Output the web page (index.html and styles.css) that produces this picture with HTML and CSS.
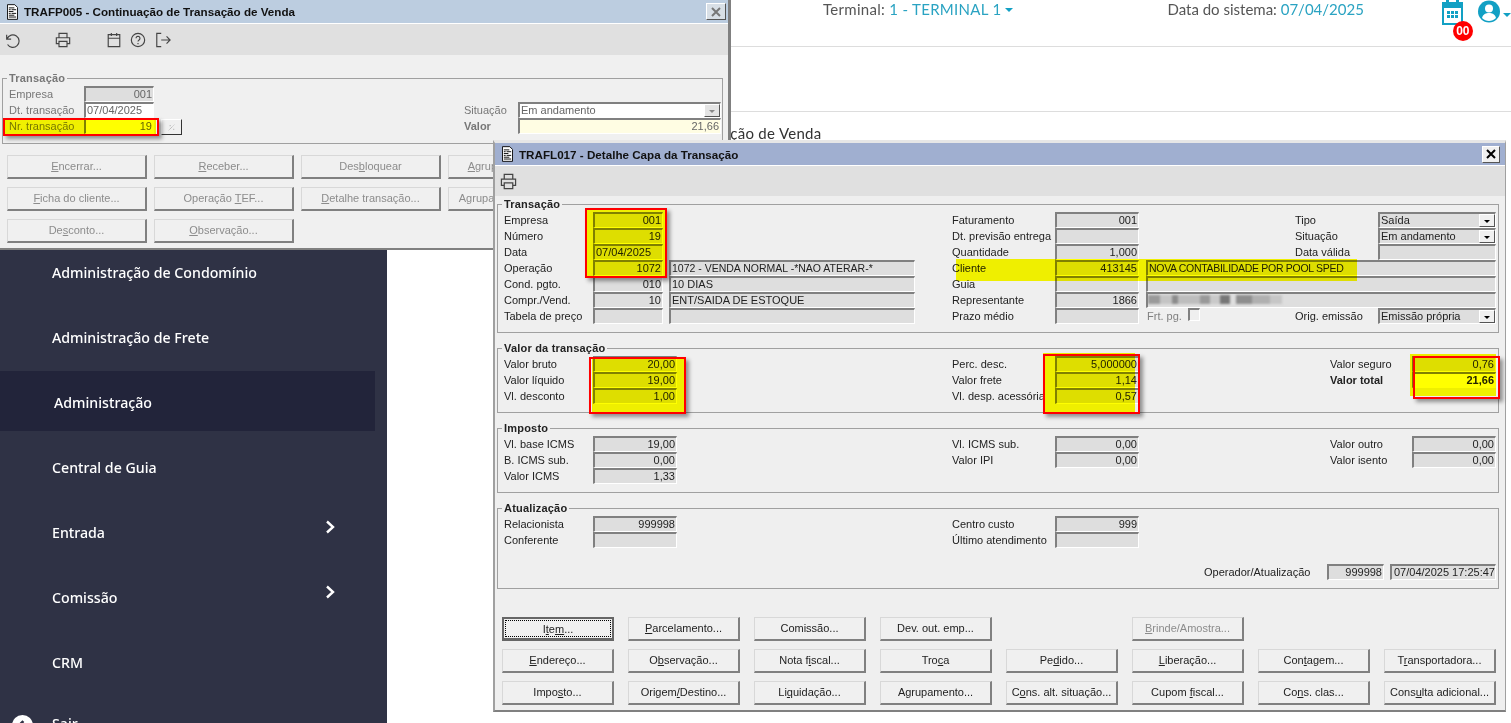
FILE: index.html
```html
<!DOCTYPE html>
<html lang="pt-BR">
<head>
  <meta charset="UTF-8" />
  <title>TRAFL017 - Detalhe Capa da Transação</title>
  <link rel="stylesheet" href="styles.css">
</head>
<body>
  <div class="app">
    <nav class="sidebar">
      <a class="side-item">Administração de Condomínio</a>
      <a class="side-item">Administração de Frete</a>
      <a class="side-item active">Administração</a>
      <a class="side-item">Central de Guia</a>
      <a class="side-item">Entrada <svg class="chev" viewBox="0 0 10 14"><path d="M2 1.5 8 7l-6 5.5" /></svg></a>
      <a class="side-item">Comissão <svg class="chev" viewBox="0 0 10 14"><path d="M2 1.5 8 7l-6 5.5" /></svg></a>
      <a class="side-item">CRM</a>
      <a class="side-item logout">
        <svg class="logout-icon" viewBox="0 0 24 24"><circle cx="12" cy="12" r="12" fill="#fff" /><path d="M13 7l-5 5 5 5M8 12h9" fill="none" stroke="#2f3245" stroke-width="3" /></svg>
        Sair
      </a>
    </nav>

    <main class="main">
      <header class="topbar">
        <span class="top-info terminal">Terminal: <b>1 - TERMINAL 1</b><i class="caret"></i></span>
        <span class="top-info sysdate">Data do sistema: <b>07/04/2025</b></span>
        <span class="cal-wrap">
          <svg class="cal-icon" viewBox="0 0 21 25">
            <path d="M4 0h3v4H4zM14 0h3v4h-3z" fill="#12a0c4" />
            <rect x="1" y="3" width="19" height="21" fill="#fff" stroke="#12a0c4" stroke-width="2" />
            <path d="M1 3h19v5H1z" fill="#12a0c4" />
            <path d="M5 11h3v3H5zM9 11h3v3H9zM13 11h3v3h-3zM5 15h3v3H5zM9 15h3v3H9zM13 15h3v3h-3z" fill="#12a0c4" />
          </svg>
          <span class="badge">00</span>
        </span>
        <svg class="user-icon" viewBox="0 0 22 23">
          <circle cx="11" cy="11.5" r="11" fill="#12a0c4" />
          <circle cx="11" cy="8.5" r="4" fill="#fff" />
          <path d="M4 18c1-4 4-5 7-5s6 1 7 5c-2 2-4.500 3-7 3s-5-1-7-3z" fill="#fff" />
        </svg>
        <i class="caret user-caret"></i>
      </header>
      <div class="subbar"></div>
      <h1 class="page-title">Continuação de Venda</h1>
    </main>
  </div>

  <!-- janela de tras -->
  <section class="win win-back">
    <div class="titlebar">
      <svg class="doc-icon" viewBox="0 0 12 17"><path d="M.5.5h8l3 3v13H.5z" fill="#fff" stroke="#000" /><path d="M2 4h6M2 6h2M5 6h5M2 8h5M2 10h2M5 10h5M2 12h6M2 14h8" stroke="#000" /></svg>
      <span class="title">TRAFP005 - Continuação de Transação de Venda</span>
      <span class="close off"><svg viewBox="0 0 10 10"><path d="M1 1l8 8M9 1l-8 8" /></svg></span>
    </div>
    <div class="toolbar">
      <svg class="tool tool-undo" viewBox="0 0 18 18"><path d="M3 3v5h5M3.500 7.500A7 7 0 1 1 4 14" /></svg>
      <svg class="tool tool-print" viewBox="0 0 18 18"><path d="M4.500 6V1.500h9V6M4.500 13H1.500V6.500h15V13h-3M4.500 10.500h9v6h-9z" /></svg>
      <svg class="tool tool-cal" viewBox="0 0 18 18"><path d="M2.500 3h13v13.500h-13zM2.500 7h13M6 1v3.500M12 1v3.500" /></svg>
      <svg class="tool tool-help" viewBox="0 0 18 18"><circle cx="9" cy="9" r="7.500" /><path d="M6.800 7a2.200 2.200 0 1 1 3.400 1.900c-.8.500-1.200 1-1.200 1.900M9 12.500v1.300" /></svg>
      <svg class="tool tool-exit" viewBox="0 0 18 18"><path d="M7 1.500H2v15h5M7 9h10M13 5l4 4-4 4" /></svg>
    </div>

    <fieldset class="group back-group">
      <legend>Transação</legend>
      <div class="back-row">
        <span class="lbl">Empresa</span><span class="fld num back-f">001</span>
      </div>
      <div class="back-row">
        <span class="lbl">Dt. transação</span><span class="fld white back-f">07/04/2025</span>
        <span class="lbl back-l2">Situação</span>
        <span class="fld white back-sel">Em andamento<i class="arrow off"></i></span>
      </div>
      <div class="back-row">
        <span class="lbl">Nr. transação</span><span class="fld white num back-f">19</span>
        <span class="zoom-btn"><svg viewBox="0 0 10 10"><path d="M2 8l6-6M3 3h1M7 7h1" /></svg></span>
        <span class="lbl back-l2 strong">Valor</span>
        <span class="fld cream num back-val">21,66</span>
      </div>
    </fieldset>

    <div class="back-btns">
      <button class="btn" disabled><u>E</u>ncerrar...</button>
      <button class="btn" disabled><u>R</u>eceber...</button>
      <button class="btn" disabled>Des<u>b</u>loquear</button>
      <button class="btn" disabled><u>A</u>grupar transação...</button>
      <button class="btn" disabled><u>F</u>icha do cliente...</button>
      <button class="btn" disabled>Operação <u>T</u>EF...</button>
      <button class="btn" disabled><u>D</u>etalhe transação...</button>
      <button class="btn" disabled>Agrupamento transação</button>
      <button class="btn" disabled>De<u>s</u>conto...</button>
      <button class="btn" disabled><u>O</u>bservação...</button>
    </div>

    <div class="mark mark-nr"></div>
    <div class="redbox box-nr"></div>
  </section>

  <!-- janela da frente -->
  <section class="win win-front">
    <div class="titlebar">
      <svg class="doc-icon" viewBox="0 0 12 17"><path d="M.5.5h8l3 3v13H.5z" fill="#fff" stroke="#000" /><path d="M2 4h6M2 6h2M5 6h5M2 8h5M2 10h2M5 10h5M2 12h6M2 14h8" stroke="#000" /></svg>
      <span class="title">TRAFL017 - Detalhe Capa da Transação</span>
      <span class="close"><svg viewBox="0 0 10 10"><path d="M1 1l8 8M9 1l-8 8" /></svg></span>
    </div>
    <div class="toolbar">
      <svg class="tool tool-print2" viewBox="0 0 18 18"><path d="M4.500 6V1.500h9V6M4.500 13H1.500V6.500h15V13h-3M4.500 10.500h9v6h-9z" /></svg>
    </div>

    <fieldset class="group g-trans">
      <legend>Transação</legend>
      <div class="row">
        <span class="lbl l1">Empresa</span><span class="fld num f1">001</span>
        <span class="lbl l2">Faturamento</span><span class="fld num f2">001</span>
        <span class="lbl l3">Tipo</span><span class="fld sel">Saída<i class="arrow"></i></span>
      </div>
      <div class="row">
        <span class="lbl l1">Número</span><span class="fld num f1">19</span>
        <span class="lbl l2">Dt. previsão entrega</span><span class="fld num f2"></span>
        <span class="lbl l3">Situação</span><span class="fld sel">Em andamento<i class="arrow"></i></span>
      </div>
      <div class="row">
        <span class="lbl l1">Data</span><span class="fld f1">07/04/2025</span>
        <span class="lbl l2">Quantidade</span><span class="fld num f2">1,000</span>
        <span class="lbl l3">Data válida</span><span class="fld sel"></span>
      </div>
      <div class="row">
        <span class="lbl l1">Operação</span><span class="fld num f1">1072</span><span class="fld desc caps">1072 - VENDA NORMAL -*NAO ATERAR-*</span>
        <span class="lbl l2">Cliente</span><span class="fld num f2">413145</span><span class="fld long caps tight">NOVA CONTABILIDADE POR POOL SPED</span>
      </div>
      <div class="row">
        <span class="lbl l1">Cond. pgto.</span><span class="fld num f1">010</span><span class="fld desc">10 DIAS</span>
        <span class="lbl l2">Guia</span><span class="fld num f2"></span><span class="fld long"></span>
      </div>
      <div class="row">
        <span class="lbl l1">Compr./Vend.</span><span class="fld num f1">10</span><span class="fld desc">ENT/SAIDA DE ESTOQUE</span>
        <span class="lbl l2">Representante</span><span class="fld num f2">1866</span><span class="fld long"><i class="blurred"></i></span>
      </div>
      <div class="row">
        <span class="lbl l1">Tabela de preço</span><span class="fld num f1"></span><span class="fld desc"></span>
        <span class="lbl l2">Prazo médio</span><span class="fld num f2"></span>
        <span class="frt"><span class="lbl off">Frt. pg.</span><i class="check"></i></span>
        <span class="lbl l3">Orig. emissão</span><span class="fld sel">Emissão própria<i class="arrow"></i></span>
      </div>
    </fieldset>

    <fieldset class="group">
      <legend>Valor da transação</legend>
      <div class="row">
        <span class="lbl l1">Valor bruto</span><span class="fld num f1w">20,00</span>
        <span class="lbl l2">Perc. desc.</span><span class="fld num f2">5,000000</span>
        <span class="lbl l4">Valor seguro</span><span class="fld num f4">0,76</span>
      </div>
      <div class="row">
        <span class="lbl l1">Valor líquido</span><span class="fld num f1w">19,00</span>
        <span class="lbl l2">Valor frete</span><span class="fld num f2">1,14</span>
        <span class="lbl l4 strong">Valor total</span><span class="fld white num f4 strong">21,66</span>
      </div>
      <div class="row">
        <span class="lbl l1">Vl. desconto</span><span class="fld num f1w">1,00</span>
        <span class="lbl l2">Vl. desp. acessória</span><span class="fld num f2">0,57</span>
      </div>
    </fieldset>

    <fieldset class="group">
      <legend>Imposto</legend>
      <div class="row">
        <span class="lbl l1">Vl. base ICMS</span><span class="fld num f1w">19,00</span>
        <span class="lbl l2">Vl. ICMS sub.</span><span class="fld num f2">0,00</span>
        <span class="lbl l4">Valor outro</span><span class="fld num f4">0,00</span>
      </div>
      <div class="row">
        <span class="lbl l1">B. ICMS sub.</span><span class="fld num f1w">0,00</span>
        <span class="lbl l2">Valor IPI</span><span class="fld num f2">0,00</span>
        <span class="lbl l4">Valor isento</span><span class="fld num f4">0,00</span>
      </div>
      <div class="row">
        <span class="lbl l1">Valor ICMS</span><span class="fld num f1w">1,33</span>
      </div>
    </fieldset>

    <fieldset class="group g-atual">
      <legend>Atualização</legend>
      <div class="row">
        <span class="lbl l1">Relacionista</span><span class="fld num f1w">999998</span>
        <span class="lbl l2">Centro custo</span><span class="fld num f2">999</span>
      </div>
      <div class="row">
        <span class="lbl l1">Conferente</span><span class="fld num f1w"></span>
        <span class="lbl l2">Último atendimento</span><span class="fld num f2"></span>
      </div>
      <div class="oper-row">
        <span class="lbl">Operador/Atualização</span>
        <span class="fld num oper-a">999998</span>
        <span class="fld oper-b">07/04/2025 17:25:47</span>
      </div>
    </fieldset>

    <div class="front-btns">
      <button class="btn focus"><span>I<u>t</u>e<u>m</u>...</span></button>
      <button class="btn"><u>P</u>arcelamento...</button>
      <button class="btn">Comissão...</button>
      <button class="btn">Dev. out. emp...</button>
      <span></span>
      <button class="btn" disabled><u>B</u>rinde/Amostra...</button>
      <span></span>
      <span></span>
      <button class="btn"><u>E</u>ndereço...</button>
      <button class="btn">O<u>b</u>servação...</button>
      <button class="btn">Nota f<u>i</u>scal...</button>
      <button class="btn">Tro<u>c</u>a</button>
      <button class="btn">Pe<u>d</u>ido...</button>
      <button class="btn"><u>L</u>iberação...</button>
      <button class="btn">Con<u>t</u>agem...</button>
      <button class="btn">T<u>r</u>ansportadora...</button>
      <button class="btn">Impo<u>s</u>to...</button>
      <button class="btn">Origem<u>/</u>Destino...</button>
      <button class="btn">Li<u>q</u>uidação...</button>
      <button class="btn">A<u>g</u>rupamento...</button>
      <button class="btn">C<u>o</u>ns. alt. situação...</button>
      <button class="btn">Cupom <u>f</u>iscal...</button>
      <button class="btn">Co<u>n</u>s. clas...</button>
      <button class="btn">Cons<u>u</u>lta adicional...</button>
    </div>

    <!-- marcacoes do print -->
    <div class="mark mark-a"></div>
    <div class="mark mark-b"></div>
    <div class="mark mark-c"></div>
    <div class="mark mark-d"></div>
    <div class="mark mark-e"></div>
    <div class="redbox box-a"></div>
    <div class="redbox box-b"></div>
    <div class="redbox box-c"></div>
    <div class="redbox box-d"></div>
  </section>
</body>
</html>
```

FILE: styles.css
```css
body {
  margin: 0;
  padding: 0;
  background: #fff;
  overflow: hidden;
  font-family: 'Liberation Sans', Arial, sans-serif;
}

.app {
  display: flex;
  height: 100vh;
  overflow: hidden;
}

/* menu lateral */
.sidebar {
  width: 387px;
  flex-shrink: 0;
  box-sizing: border-box;
  padding-top: 241px;
  background: #2f3245;
  overflow: hidden;
}

.side-item {
  position: relative;
  display: flex;
  align-items: center;
  width: 375px;
  height: 60px;
  margin-bottom: 5px;
  padding: 2px 0 0 52px;
  box-sizing: border-box;
  color: #fff;
  font-family: 'Noto Sans', sans-serif;
  font-size: 14.2px;
  font-weight: 500;
}

.side-item.active {
  background: #22243a;
  padding-left: 54px;
}

.side-item.logout {
  align-items: flex-start;
  padding-top: 18px;
}

.chev {
  position: absolute;
  left: 325px;
  top: 19px;
  width: 10px;
  height: 14px;
  fill: none;
  stroke: #fff;
  stroke-width: 2.4;
}

.logout-icon {
  position: absolute;
  left: 12px;
  top: 19px;
  width: 21px;
  height: 21px;
}

/* area branca */
.main {
  flex: 1;
  min-width: 0;
}

.topbar {
  display: flex;
  height: 46px;
  border-bottom: 1px solid #ddd;
  padding-left: 436px;
  font-family: 'Lato', sans-serif;
  font-size: 15px;
  color: #555;
}

.top-info {
  line-height: 18px;
  white-space: nowrap;
}

.terminal {
  letter-spacing: .3px;
}

.top-info b {
  font-weight: normal;
  color: #2aa3c2;
}

.sysdate {
  margin-left: 154px;
}

.caret {
  display: inline-block;
  margin-left: 4px;
  vertical-align: 3px;
  border-left: 4px solid transparent;
  border-right: 4px solid transparent;
  border-top: 4px solid #12a0c4;
}

.cal-wrap {
  position: relative;
  flex-shrink: 0;
  width: 21px;
  height: 25px;
  margin-left: 78px;
}

.cal-icon {
  display: block;
  width: 21px;
  height: 25px;
}

.badge {
  position: absolute;
  left: 11px;
  top: 21px;
  width: 20px;
  height: 20px;
  border-radius: 50%;
  background: #f00;
  color: #fff;
  font: bold 12px/20px 'Liberation Sans', sans-serif;
  text-align: center;
}

.user-icon {
  flex-shrink: 0;
  width: 22px;
  height: 23px;
  margin-left: 15px;
}

.user-caret {
  flex-shrink: 0;
  height: 0;
  margin: 13px 0 0 3px;
  vertical-align: top;
}

.subbar {
  height: 64px;
  border-bottom: 1px solid #ddd;
}

.page-title {
  margin: 12px 0 0 281px;
  font: normal 15px/18px 'Lato', sans-serif;
  letter-spacing: .3px;
  color: #333;
}

/* janelas */
.win {
  position: absolute;
  box-sizing: border-box;
  background: #f0f0f0;
  font-size: 11px;
  color: #222;
}

.win-back {
  left: 0;
  top: 0;
  width: 731px;
  height: 250px;
  border-right: 3px solid #808080;
  border-bottom: 2px solid #808080;
}

.win-front {
  left: 493px;
  top: 140px;
  width: 1013px;
  height: 572px;
  background: #efefef;
  border: 1px solid #a0a0a0;
  border-left-width: 2px;
  border-top: 3px solid #e6e6e6;
  border-bottom: 2px solid #808080;
}

.titlebar {
  display: flex;
  align-items: center;
  height: 23px;
  padding-left: 7px;
  background: #bccde0;
  border-bottom: 1px solid #fff;
}

.win-front .titlebar {
  background: #a0afd0;
  height: 22px;
}

.doc-icon {
  width: 11px;
  height: 16px;
  flex-shrink: 0;
}

.title {
  margin-left: 6px;
  font-size: 11.65px;
  font-weight: bold;
  color: #111;
}

.close {
  display: flex;
  align-items: center;
  justify-content: center;
  width: 18px;
  height: 17px;
  margin-left: auto;
  margin-right: 5px;
  box-sizing: border-box;
  background: #f0f0f0;
  border: 1px solid #fff;
  border-right-color: #555;
  border-bottom-color: #555;
}

.close svg {
  width: 10px;
  height: 10px;
  fill: none;
  stroke: #000;
  stroke-width: 2;
}

.close.off {
  width: 20px;
  margin-right: 2px;
  background: #d8dfe6;
}

.close.off svg {
  stroke: #777;
}

.toolbar {
  display: flex;
  align-items: center;
  height: 31px;
  padding-left: 4px;
  background: #e0e0e0;
}

.win-front .toolbar {
  height: 30px;
  padding-left: 5px;
}

.tool {
  width: 16px;
  height: 16px;
  fill: none;
  stroke: #444;
  stroke-width: 1.3;
  flex-shrink: 0;
}

.tool-print { margin-left: 35px; }
.tool-cal { margin-left: 35px; }
.tool-help { margin-left: 8px; }
.tool-exit { margin-left: 9px; }
.tool-print2 { width: 17px; height: 17px; }

/* grupos */
.group {
  margin: 8px 6px 0 2px;
  min-width: 0;
  padding: 1px 0 8px 6px;
  border: 1px solid #a0a0a0;
}

.group legend {
  padding: 0 2px;
  margin-left: -2px;
  font-weight: bold;
  line-height: 14px;
  letter-spacing: .2px;
}

.g-trans {
  margin-top: 1px;
}

.g-atual {
  padding-bottom: 7px;
}

.row {
  display: grid;
  grid-template-columns:
    [a] 89px [b] 70px [c] 6px [d] 8px [e] 238px [f] 37px [g] 103px [h] 84px
    [i] 7px [j] 149px [k] 35px [m] 48px [n] 34px [o] 84px [p];
  height: 16px;
}

.lbl {
  line-height: 17px;
  white-space: nowrap;
}

.strong {
  font-weight: bold;
}

.l1 { grid-column: a / b; }
.l2 { grid-column: g / h; }
.l3 { grid-column: k / n; }
.l4 { grid-column: m / o; }
.f1 { grid-column: b / c; }
.f1w { grid-column: b / e; }
.f2 { grid-column: h / i; }
.f4 { grid-column: o / p; }
.desc { grid-column: d / f; }
.long { grid-column: j / p; }
.sel { grid-column: n / p; }

.fld {
  position: relative;
  box-sizing: border-box;
  height: 16px;
  padding: 0 1px;
  background: #dedede;
  border-top: 2px solid #808080;
  border-left: 2px solid #808080;
  border-right: 1px solid #fff;
  border-bottom: 1px solid #fff;
  font-size: 11px;
  line-height: 13px;
  white-space: nowrap;
  overflow: hidden;
}

.fld.num {
  text-align: right;
}

.fld.white {
  background: #fff;
}

.fld.cream {
  background: #fffde3;
}

.caps {
  font-size: 10.5px;
}

.tight {
  letter-spacing: -.3px;
}

.blurred {
  position: absolute;
  left: 0;
  top: 1px;
  width: 134px;
  height: 9px;
  filter: blur(1px);
  background: linear-gradient(90deg, #9a9a9a 0 12px, #c4c4c4 12px 24px, #8c8c8c 24px 30px, #bdbdbd 30px 52px, #999 52px 62px, #c9c9c9 62px 72px, #777 72px 82px, #dedede 82px 88px, #8e8e8e 88px 104px, #b0b0b0 104px 122px, #c6c6c6 122px 134px);
}

.arrow {
  position: absolute;
  right: 0;
  top: 0;
  box-sizing: border-box;
  width: 16px;
  height: 13px;
  background: #f0f0f0;
  border-top: 1px solid #fff;
  border-left: 1px solid #fff;
  border-right: 1px solid #555;
  border-bottom: 1px solid #555;
}

.arrow::after {
  content: "";
  position: absolute;
  left: 4px;
  top: 5px;
  border-left: 3px solid transparent;
  border-right: 3px solid transparent;
  border-top: 3px solid #000;
}

.arrow.off {
  background: #e4e4e4;
}

.arrow.off::after {
  border-top-color: #888;
}

.frt {
  grid-column: j / k;
  display: flex;
  align-items: flex-start;
  gap: 6px;
  padding-left: 1px;
}

.off {
  color: #808080;
}

.check {
  width: 12px;
  height: 13px;
  box-sizing: border-box;
  border-top: 2px solid #808080;
  border-left: 2px solid #808080;
  border-right: 1px solid #fff;
  border-bottom: 1px solid #fff;
}

.oper-row {
  display: flex;
  margin-top: 16px;
}

.oper-row .lbl {
  margin-left: 700px;
  width: 123px;
}

.oper-a {
  width: 57px;
}

.oper-b {
  width: 106px;
  margin-left: 6px;
  padding-left: 2px;
}

/* janela de tras */
.back-group {
  margin: 16px 5px 0 2px;
  padding: 1px 0 9px 6px;
  color: #777;
}

.back-group legend {
  color: #777;
}

.back-group .fld {
  color: #666;
}

.back-row {
  display: grid;
  grid-template-columns: 75px 70px 7px 21px 282px 54px 203px;
  height: 16px;
}

.back-f { grid-column: 2; }
.zoom-btn { grid-column: 4; }
.back-l2 { grid-column: 6; }
.back-sel, .back-val { grid-column: 7; }

.zoom-btn {
  display: flex;
  align-items: center;
  justify-content: center;
  height: 16px;
  box-sizing: border-box;
  margin-top: 1px;
  background: #f0f0f0;
  border-top: 1px solid #fff;
  border-left: 1px solid #fff;
  border-right: 1px solid #333;
  border-bottom: 1px solid #333;
}

.zoom-btn svg {
  width: 9px;
  height: 9px;
  fill: none;
  stroke: #999;
  stroke-dasharray: 1 1;
}

.back-btns {
  display: grid;
  grid-template-columns: repeat(4, 140px);
  grid-auto-rows: 24px;
  gap: 8px 7px;
  margin: 11px 0 0 7px;
}

.front-btns {
  display: grid;
  grid-template-columns: repeat(8, 112px);
  grid-auto-rows: 24px;
  gap: 8px 14px;
  margin: 28px 0 0 7px;
}

.btn {
  box-sizing: border-box;
  padding: 0 0 2px;
  background: #f0f0f0;
  border-style: solid;
  border-width: 1px 2px 2px 1px;
  border-color: #d8d8d8 #808080 #808080 #d8d8d8;
  font: 11px 'Liberation Sans', Arial, sans-serif;
  color: #222;
  white-space: nowrap;
  overflow: hidden;
}

.btn:disabled {
  color: #8c8c8c;
}

.btn.focus {
  border: 2px solid #666;
  border-bottom-width: 3px;
  padding: 1px;
}

.btn.focus span {
  display: flex;
  align-items: center;
  justify-content: center;
  height: 100%;
  outline: 1px dotted #000;
  outline-offset: -1px;
}

/* marca texto e caixas vermelhas do print */
.mark {
  position: absolute;
  background: #ff0;
  mix-blend-mode: multiply;
  pointer-events: none;
}

.redbox {
  position: absolute;
  box-sizing: border-box;
  border: 2px solid #f00;
  box-shadow: 3px 3px 4px rgba(0, 0, 0, .4);
  pointer-events: none;
}

.mark-nr { left: 5px; top: 119px; width: 151px; height: 15px; }
.box-nr { left: 3px; top: 118px; width: 156px; height: 18px; }

.mark-a { left: 92px; top: 66px; width: 78px; height: 69px; }
.mark-b { left: 97px; top: 214px; width: 92px; height: 56px; }
.mark-c { left: 548px; top: 210px; width: 92px; height: 59px; }
.mark-d { left: 915px; top: 211px; width: 86px; height: 42px; }
.mark-e { left: 461px; top: 116px; width: 401px; height: 22px; }

.box-a { left: 90px; top: 65px; width: 82px; height: 70px; }
.box-b { left: 94px; top: 214px; width: 97px; height: 57px; }
.box-c { left: 548px; top: 211px; width: 97px; height: 60px; }
.box-d { left: 918px; top: 213px; width: 87px; height: 43px; }
```
